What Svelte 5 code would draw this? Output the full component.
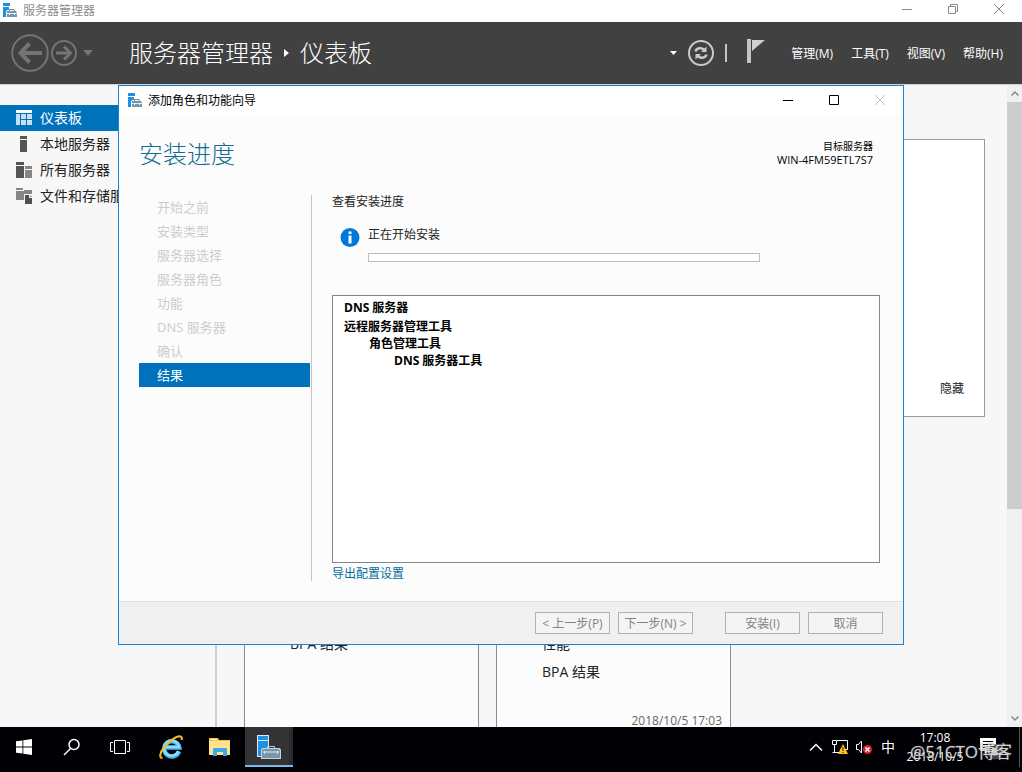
<script lang="ts">
	const sideItems = [
		{ label: '仪表板', icon: 'dashboard' },
		{ label: '本地服务器', icon: 'local' },
		{ label: '所有服务器', icon: 'all' },
		{ label: '文件和存储服务', icon: 'storage' }
	];

	const menus = ['管理(M)', '工具(T)', '视图(V)', '帮助(H)'];

	const steps = [
		'开始之前',
		'安装类型',
		'服务器选择',
		'服务器角色',
		'功能',
		'DNS 服务器',
		'确认',
		'结果'
	];

	let activeSide = 'dashboard';
	let currentStep = 7;
	let progress = 0;
</script>

{#snippet serverIcon()}
	<svg class="app-icon" width="16" height="16" viewBox="0 0 16 16" aria-hidden="true">
		<path d="M1 0h7v3H1z" fill="#1e90de" />
		<path d="M1 4h6v3H5L4 9v5H1z" fill="#1e90de" />
		<path d="M7.500 8.500v-2h4.500v2" fill="none" stroke="#6d8da3" />
		<path d="M5 8h9l1 2v4H5z" fill="#7896aa" />
		<path d="M5 10.500h10" stroke="#dfe8ee" />
		<path d="M7 10h1v2H7zM12 10h1v2h-1z" fill="#fff" />
	</svg>
{/snippet}

<div class="desktop">
	<header class="titlebar">
		{@render serverIcon()}
		<span class="titlebar__text">服务器管理器</span>
		<div class="captions">
			<button type="button" aria-label="最小化">
				<svg width="12" height="12" viewBox="0 0 12 12"><path d="M1 6.500h10" stroke="#8a8a8a" /></svg>
			</button>
			<button type="button" aria-label="还原">
				<svg width="12" height="12" viewBox="0 0 12 12" fill="none" stroke="#8a8a8a">
					<path d="M1.500 3.500h7v7h-7zM3.500 3.500v-2h7v7h-2" />
				</svg>
			</button>
			<button type="button" aria-label="关闭">
				<svg width="12" height="12" viewBox="0 0 12 12"><path d="M1 1l10 10M11 1L1 11" stroke="#8a8a8a" /></svg>
			</button>
		</div>
	</header>

	<div class="toolbar">
		<button type="button" class="round" aria-label="后退">
			<svg width="38" height="38" viewBox="0 0 38 38" fill="none" stroke="#747474">
				<circle cx="19" cy="19" r="17.800" stroke-width="2" />
				<path d="M31 19H10" stroke-width="4" />
				<path d="M18.500 9.500L9.500 19l9 9.500" stroke-width="4" />
			</svg>
		</button>
		<button type="button" class="round" aria-label="前进">
			<svg width="26" height="26" viewBox="0 0 26 26" fill="none" stroke="#747474">
				<circle cx="13" cy="13" r="12" stroke-width="2" />
				<path d="M5 13h14" stroke-width="3" />
				<path d="M13 6.500l6.500 6.500-6.500 6.500" stroke-width="3" />
			</svg>
		</button>
		<button type="button" class="history" aria-label="历史记录">
			<svg width="10" height="6" viewBox="0 0 10 6"><path d="M0 0h10L5 6z" fill="#747474" /></svg>
		</button>
		<h1 class="crumbs">
			<span>服务器管理器</span>
			<svg width="5" height="8" viewBox="0 0 5 8" aria-hidden="true"><path d="M0 0l5 4-5 4z" fill="#fff" /></svg>
			<span>仪表板</span>
		</h1>
		<div class="tools">
			<button type="button" aria-label="更多">
				<svg width="8" height="4" viewBox="0 0 8 4"><path d="M0 0h7L3.500 4z" fill="#fff" /></svg>
			</button>
			<button type="button" class="refresh" aria-label="刷新">
				<svg width="26" height="26" viewBox="0 0 26 26" fill="none" stroke="#cacaca">
					<circle cx="13" cy="13" r="12" stroke-width="2" />
					<path d="M7.500 11.500C8.500 8 13 7 16.500 10" stroke-width="2.500" />
					<path d="M18.500 6.500V12H13z" fill="#cacaca" stroke="none" />
					<path d="M18.500 14.500C17.500 18 13 19 9.500 16" stroke-width="2.500" />
					<path d="M7.500 19.500V14H13z" fill="#cacaca" stroke="none" />
				</svg>
			</button>
			<span class="divider"></span>
			<button type="button" class="flag" aria-label="通知">
				<svg width="18" height="24" viewBox="0 0 18 24">
					<path d="M0 0h4v24H0z" fill="#c4c4c4" />
					<path d="M5 1h13L5 12z" fill="#d0d0d0" />
				</svg>
			</button>
			<nav class="menus" aria-label="菜单">
				{#each menus as menu}
					<button type="button">{menu}</button>
				{/each}
			</nav>
		</div>
	</div>

	<div class="workspace">
		<nav class="side" aria-label="导航">
			{#each sideItems as item}
				<a href="#{item.icon}" class="side__item" class:active={item.icon === activeSide}>
					<svg width="16" height="16" viewBox="0 0 16 16" aria-hidden="true">
						{#if item.icon === 'dashboard'}
							<path d="M0 0h16v3H0z" fill="#fff" />
							<path d="M0 4h4v11H0zM5 4h5v5H5zM11 4h5v5h-5zM5 10h5v5H5zM11 10h5v5h-5z" fill="#c6dff3" />
						{:else if item.icon === 'local'}
							<path d="M4 0h7v3H4zM4 4h7v12H4z" fill="#555" />
						{:else if item.icon === 'all'}
							<path d="M0 0h8v3H0zM0 4h8v12H0z" fill="#555" />
							<path d="M9 4h7v3H9zM9 8h7v8H9z" fill="#858585" />
						{:else}
							<path d="M0 0h7v2H0zM0 3h16v9H0zM8 2h8v2H8z" fill="#858585" />
							<path d="M8 6h8v10H8z" fill="#f7f7f7" />
							<path d="M9 7h4v3h3v6H9z" fill="#505050" />
							<path d="M14 7l2 2h-2z" fill="#858585" />
						{/if}
					</svg>
					{item.label}
				</a>
			{/each}
		</nav>

		<main class="content">
			<section class="welcome">
				<button type="button">隐藏</button>
			</section>
			<div class="tiles">
				<section class="tile">
					<a href="#bpa-dns">BPA 结果</a>
				</section>
				<section class="tile">
					<a href="#performance">性能</a>
					<a href="#bpa-local">BPA 结果</a>
					<time>2018/10/5 17:03</time>
				</section>
			</div>
		</main>

		<div class="scroll" aria-hidden="true">
			<svg width="15" height="17" viewBox="0 0 15 17"><path d="M4.500 10.500L8 7l3.500 3.500" /></svg>
			<div class="scroll__track"><div class="scroll__thumb"></div></div>
			<svg width="15" height="17" viewBox="0 0 15 17"><path d="M4.500 6.500L8 10l3.500-3.500" /></svg>
		</div>

		<div class="wizard" role="dialog" aria-label="添加角色和功能向导">
			<div class="wizard__bar">
				{@render serverIcon()}
				<span>添加角色和功能向导</span>
				<div class="captions">
					<button type="button" aria-label="最小化">
						<svg width="12" height="12" viewBox="0 0 12 12"><path d="M1 6.500h10" stroke="#000" /></svg>
					</button>
					<button type="button" aria-label="最大化">
						<svg width="12" height="12" viewBox="0 0 12 12"><path d="M1.500 1.500h9v9h-9z" fill="none" stroke="#000" /></svg>
					</button>
					<button type="button" aria-label="关闭" disabled>
						<svg width="12" height="12" viewBox="0 0 12 12"><path d="M1 1l10 10M11 1L1 11" stroke="#c4c4c4" /></svg>
					</button>
				</div>
			</div>

			<div class="wizard__head">
				<h2>安装进度</h2>
				<div class="target">
					<span class="target__label">目标服务器</span>
					<span>WIN-4FM59ETL7S7</span>
				</div>
			</div>

			<div class="wizard__body">
				<ol class="steps">
					{#each steps as step, i}
						<li class:current={i === currentStep}>{step}</li>
					{/each}
				</ol>
				<div class="results">
					<p class="lead">查看安装进度</p>
					<div class="status">
						<svg width="20" height="20" viewBox="0 0 20 20" aria-hidden="true">
							<circle cx="10" cy="9.500" r="9.500" fill="#0078d7" />
							<path d="M8.500 3.500h3V6h-3zM8.500 7.500h3v8h-3z" fill="#fff" />
						</svg>
						<div class="status__main">
							<label for="install-progress">正在开始安装</label>
							<progress id="install-progress" value={progress} max="100"></progress>
						</div>
					</div>
					<div class="features">
						<ul>
							<li>DNS 服务器</li>
						</ul>
						<ul>
							<li>
								远程服务器管理工具
								<ul>
									<li>
										角色管理工具
										<ul>
											<li>DNS 服务器工具</li>
										</ul>
									</li>
								</ul>
							</li>
						</ul>
					</div>
					<a class="export" href="#export">导出配置设置</a>
				</div>
			</div>

			<div class="wizard__foot">
				<div class="pair">
					<button type="button" disabled>&lt; 上一步(P)</button>
					<button type="button" disabled>下一步(N) &gt;</button>
				</div>
				<div class="pair">
					<button type="button" disabled>安装(I)</button>
					<button type="button" disabled>取消</button>
				</div>
			</div>
		</div>
	</div>

	<footer class="taskbar">
		<div class="pinned">
			<button type="button" aria-label="开始">
				<svg width="16" height="16" viewBox="0 0 16 16" fill="#fff">
					<path d="M0 2.300L6.500 1.400v6.100H0zM7.300 1.300L16 0v7.500H7.300zM0 8.400h6.500v6.200L0 13.700zM7.300 8.400H16V16l-8.700-1.300z" />
				</svg>
			</button>
			<button type="button" aria-label="搜索">
				<svg width="18" height="18" viewBox="0 0 18 18" fill="none" stroke="#fff" stroke-width="1.500">
					<circle cx="11" cy="6.500" r="5" />
					<path d="M7.500 10.500L1 17" />
				</svg>
			</button>
			<button type="button" aria-label="任务视图">
				<svg width="20" height="14" viewBox="0 0 20 14" fill="none" stroke="#fff">
					<path d="M4.500.500h11v13h-11zM3 2.500H.500v9H3M17 2.500h2.500v9H17" />
				</svg>
			</button>
		</div>
		<div class="apps">
			<button type="button" aria-label="Internet Explorer">
				<svg width="24" height="24" viewBox="0 0 24 24" fill="none">
					<path d="M20 16.500A7.600 7.600 0 1 1 20.300 12.500H6" stroke="#3fb4ee" stroke-width="4.500" />
					<path d="M19.500 16A7.600 7.600 0 1 1 20 12H6.500" stroke="#8adcfb" stroke-width="2.500" />
					<path d="M3.500 23C0 23 .500 18 5 12.500 10 6 18 .500 21.500 1.500c1.500.500 1.500 2 1 3.500" stroke="#f5bd25" stroke-width="2" />
				</svg>
			</button>
			<button type="button" aria-label="文件资源管理器">
				<svg width="22" height="18" viewBox="0 0 22 18">
					<path d="M0 0h9l1 2h11v15H0z" fill="#f0c64f" />
					<path d="M0 3h21v14H0z" fill="#ffe391" />
					<path d="M2 1h6v1H2z" fill="#fff3bd" />
					<path d="M4 18v-7l1-1h12l1 1v7h-4v-4H8v4z" fill="#39ade3" />
				</svg>
			</button>
			<button type="button" class="running" aria-label="服务器管理器">
				<svg width="24" height="24" viewBox="0 0 24 24">
					<path d="M0 0h12v22H0z" fill="#d5ebfa" />
					<path d="M1 1h10v4H1zM1 6h10v15H1z" fill="#1e90de" />
					<path d="M10.500 13.500v-2h7v2" fill="none" stroke="#b9cbd6" />
					<path d="M5 13h18l1 2v9H4v-9z" fill="#c3d4de" />
					<path d="M6 14h16l1 2v7H5v-7z" fill="#7896aa" />
					<path d="M6 17h16M7.500 16v3M20.500 16v3" stroke="#dfe8ee" />
				</svg>
			</button>
		</div>
		<div class="tray">
			<button type="button" aria-label="显示隐藏的图标">
				<svg width="14" height="8" viewBox="0 0 14 8" fill="none" stroke="#fff"><path d="M1 7.500L7 1.500l6 6" stroke-width="1.500" /></svg>
			</button>
			<button type="button" aria-label="网络">
				<svg width="18" height="16" viewBox="0 0 18 16" fill="none" stroke="#fff">
					<path d="M6 1.500h10.500v9H9M1.500 1.500h4v4h-4zM3.500 5v8.500M1.500 13.500h7" />
					<path d="M12 5l5 10H7z" fill="#ffc20e" stroke="none" />
					<path d="M12 8v4M12 13v1" stroke="#222" />
				</svg>
			</button>
			<button type="button" aria-label="音量">
				<svg width="18" height="16" viewBox="0 0 18 16" fill="none" stroke="#fff">
					<path d="M1.500 5.500h2l3-3.500v12l-3-3.500h-2z" />
					<circle cx="12.500" cy="10.500" r="4.500" fill="#dc1f2e" stroke="none" />
					<path d="M10.500 8.500l4 4M14.500 8.500l-4 4" stroke-width="1.500" />
				</svg>
			</button>
			<button type="button" class="ime">中</button>
		</div>
		<div class="clock">
			<span>17:08</span>
			<span>2018/10/5</span>
		</div>
		<button type="button" class="action" aria-label="操作中心">
			<svg width="24" height="24" viewBox="0 0 24 24">
				<path d="M0 2h16v13H9l-4 4v-4H0z" fill="#fff" />
				<path d="M3 5.500h10M3 8.500h10M3 11.500h6" stroke="#000" />
				<circle cx="15" cy="16" r="7.500" fill="#444" />
				<path d="M17.500 12.500a4 4 0 1 0 1 5 4 4 0 0 1-1-5z" fill="#ddd" />
			</svg>
		</button>
		<span class="watermark">@51CTO博客</span>
	</footer>
</div>

<style>
	:global(body) {
		margin: 0;
		overflow: hidden;
	}

	.desktop {
		display: flex;
		flex-direction: column;
		height: 100vh;
		font-family: 'Open Sans', 'Noto Sans CJK SC', sans-serif;
		font-size: 12px;
		line-height: 14px;
		color: #222;
		background: #f7f7f7;
	}

	button {
		display: inline-flex;
		align-items: center;
		justify-content: center;
		padding: 0;
		border: 0;
		background: none;
		color: inherit;
		font: inherit;
		white-space: nowrap;
	}

	a {
		color: inherit;
		text-decoration: none;
	}

	svg {
		display: block;
		flex: none;
	}

	ul,
	ol {
		margin: 0;
		padding: 0;
		list-style: none;
	}

	.titlebar {
		display: flex;
		align-items: center;
		gap: 5px;
		height: 22px;
		padding-left: 2px;
		background: #fff;
		color: #8c8c8c;
	}

	.captions {
		display: flex;
		align-self: flex-start;
		gap: 34px;
		margin-left: auto;
		padding: 3px 17px 0 0;
	}

	.toolbar {
		display: flex;
		align-items: center;
		height: 62px;
		padding: 0 19px 0 11px;
		border-bottom: 1px solid #d0d0d0;
		background: #414141;
		color: #fff;
	}

	.round {
		margin-right: 2px;
	}

	.history {
		margin-left: 4px;
	}

	.crumbs {
		display: flex;
		align-items: center;
		gap: 11px;
		margin: 0 0 0 36px;
		font-size: 24px;
		font-weight: 300;
		line-height: 32px;
		white-space: nowrap;
	}

	.tools {
		display: flex;
		align-items: center;
		margin-left: auto;
	}

	.refresh {
		margin-left: 10px;
	}

	.divider {
		width: 2px;
		height: 18px;
		margin: 0 20px 0 11px;
		background: #c4c4c4;
	}

	.flag {
		margin: 0 26px 4px 0;
	}

	.menus {
		display: flex;
		gap: 18px;
		padding-top: 2px;
	}

	.workspace {
		position: relative;
		display: flex;
		flex: 1;
		min-height: 0;
	}

	.side {
		flex: none;
		width: 215px;
		padding-top: 20px;
		border-right: 2px solid #cfcfcf;
		overflow: hidden;
	}

	.side__item {
		display: flex;
		align-items: center;
		gap: 8px;
		height: 26px;
		padding-left: 16px;
		font-size: 14px;
		white-space: nowrap;
	}

	.side__item.active {
		background: #0072bc;
		color: #fff;
	}

	.content {
		display: flex;
		flex: 1;
		flex-direction: column;
		gap: 183px;
		padding: 54px 22px 0 27px;
		overflow: hidden;
	}

	.welcome {
		box-sizing: border-box;
		display: flex;
		flex: none;
		align-items: flex-end;
		justify-content: flex-end;
		height: 278px;
		padding: 20px;
		border: 1px solid #9a9a9a;
		background: #fff;
	}

	.tiles {
		display: flex;
		flex: 1;
		gap: 17px;
		min-height: 0;
	}

	.tile {
		box-sizing: border-box;
		display: flex;
		flex-direction: column;
		width: 235px;
		padding: 29px 8px 0 45px;
		border: 1px solid #8c8c8c;
		border-bottom: 0;
		background: #fcfcfc;
		font-size: 14px;
		line-height: 28px;
	}

	.tile time {
		margin-top: 28px;
		color: #666;
		font-size: 12px;
		line-height: 14px;
		text-align: right;
	}

	.scroll {
		display: flex;
		flex: none;
		flex-direction: column;
		width: 15px;
		background: #f0f0f0;
	}

	.scroll path {
		fill: none;
		stroke: #888;
		stroke-width: 1.5;
	}

	.scroll__track {
		flex: 1;
	}

	.scroll__thumb {
		height: 67%;
		background: #cdcdcd;
	}

	.wizard {
		position: absolute;
		top: 0;
		right: 118px;
		left: 118px;
		border: 1px solid #1883d7;
		background: #fcfcfc;
		color: #000;
	}

	.wizard__bar {
		display: flex;
		align-items: center;
		gap: 5px;
		height: 30px;
		padding-left: 8px;
		background: #fff;
	}

	.wizard__bar .captions {
		padding-top: 8px;
	}

	.wizard__head {
		display: flex;
		justify-content: space-between;
		box-sizing: border-box;
		height: 79px;
		padding: 22px 30px 0 20px;
	}

	h2 {
		margin: 0;
		color: #126c91;
		font-size: 24px;
		font-weight: 300;
		line-height: 32px;
	}

	.target {
		display: flex;
		flex-direction: column;
		align-items: flex-end;
		padding-top: 2px;
		font-size: 11px;
		line-height: 13px;
	}

	.target__label {
		font-size: 10px;
	}

	.wizard__body {
		display: flex;
		padding: 0 23px 20px 20px;
	}

	.steps {
		flex: none;
		width: 171px;
		padding-right: 1px;
		border-right: 1px solid #c4c4c4;
		color: #cdcdcd;
		font-size: 13px;
		line-height: 24px;
	}

	.steps li {
		padding-left: 18px;
	}

	.steps .current {
		background: #0072bc;
		color: #fff;
	}

	.results {
		flex: 1;
		margin-left: 20px;
	}

	.lead {
		margin: 0 0 19px;
	}

	.status {
		display: flex;
		gap: 8px;
		padding: 0 120px 0 8px;
	}

	.status__main {
		display: flex;
		flex: 1;
		flex-direction: column;
		gap: 11px;
	}

	.lead,
	.status label {
		color: #222;
	}

	progress {
		box-sizing: border-box;
		display: block;
		width: 100%;
		height: 9px;
		border: 1px solid #bcbcbc;
		background: #fff;
		appearance: none;
	}

	progress::-webkit-progress-bar {
		background: #fff;
	}

	.features {
		box-sizing: border-box;
		height: 268px;
		margin: 33px 0 4px;
		padding: 3px 11px;
		border: 1px solid #828790;
		background: #fff;
		font-weight: 700;
		line-height: 17px;
	}

	.features > ul + ul {
		margin-top: 2px;
	}

	.features ul ul {
		padding-left: 25px;
	}

	.export {
		display: block;
		color: #00709b;
	}

	.wizard__foot {
		display: flex;
		justify-content: flex-end;
		gap: 32px;
		padding: 10px 20px;
		border-top: 1px solid #dfdfdf;
		background: #f0f0f0;
	}

	.pair {
		display: flex;
		gap: 8px;
	}

	.pair button {
		box-sizing: border-box;
		width: 75px;
		height: 22px;
		padding-top: 2px;
		border: 1px solid #adb2b5;
		background: #f4f4f4;
		color: #838383;
	}

	.taskbar {
		position: relative;
		display: flex;
		box-sizing: border-box;
		height: 45px;
		padding-bottom: 5px;
		background: #000005;
		color: #fff;
	}

	.pinned,
	.apps {
		display: flex;
	}

	.pinned button,
	.apps button {
		width: 48px;
	}

	.apps {
		gap: 1px;
		margin-left: 3px;
	}

	.apps .running {
		box-sizing: border-box;
		border-top: 2px solid transparent;
		border-bottom: 2px solid #76b9ed;
		background: #333335;
		box-shadow: inset -4px 0 #2a2a2c;
	}

	.tray {
		display: flex;
		margin-left: auto;
		padding-right: 5px;
	}

	.tray button {
		width: 24px;
	}

	.ime {
		font-size: 14px;
	}

	.clock {
		display: flex;
		flex-direction: column;
		align-items: center;
		gap: 5px;
		width: 60px;
		padding-top: 4px;
	}

	.action {
		box-sizing: border-box;
		width: 55px;
		margin-right: 2px;
		padding-top: 2px;
		border-right: 1px solid #555;
	}

	.watermark {
		position: absolute;
		right: 10px;
		bottom: 8px;
		color: rgba(255, 255, 255, 0.8);
		font-size: 17px;
		line-height: 24px;
		text-shadow: 0 0 2px #555;
	}
</style>
